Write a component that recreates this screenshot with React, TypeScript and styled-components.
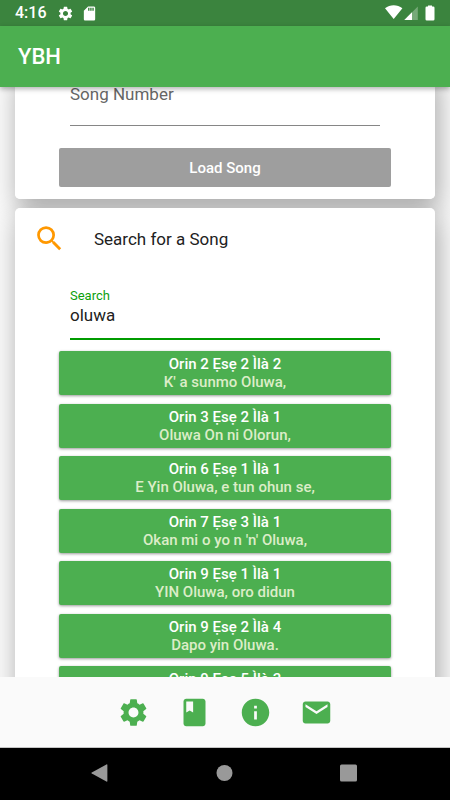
import React, { useState } from "react";
import styled, { createGlobalStyle } from "styled-components";
import {
  MdBook,
  MdEmail,
  MdInfo,
  MdSdCard,
  MdSearch,
  MdSettings,
} from "react-icons/md";

const GlobalStyle = createGlobalStyle`
  *, *::before, *::after { box-sizing: border-box; }
  body { margin: 0; font-family: Roboto, "Noto Sans", sans-serif; }
  button, input { font-family: inherit; }
`;

const Screen = styled.div`
  display: flex;
  flex-direction: column;
  height: 100vh;
  background: #fafafa;
  color: #212121;
`;

const StatusBar = styled.div`
  display: flex;
  align-items: center;
  justify-content: space-between;
  flex: none;
  height: 26px;
  padding: 0 15px;
  background: #3b843e;
  color: #fff;
`;

const StatusGroup = styled.div<{ $gap: number }>`
  display: flex;
  align-items: center;
  gap: ${(p) => p.$gap}px;
`;

const Clock = styled.span`
  font-size: 16px;
  font-weight: 500;
  line-height: 26px;
`;

const AppBar = styled.header`
  position: relative;
  z-index: 2;
  display: flex;
  align-items: center;
  flex: none;
  height: 61px;
  padding: 0 18px;
  background: #4caf50;
  color: #fff;
  box-shadow: 0 2px 5px rgba(0, 0, 0, 0.3);
`;

const Title = styled.h1`
  margin: 0;
  font-size: 22px;
  font-weight: 500;
  line-height: 28px;
`;

const Content = styled.main`
  isolation: isolate;
  flex: 1;
  min-height: 0;
  overflow: hidden;
`;

const Cards = styled.div`
  display: flex;
  flex-direction: column;
  gap: 9px;
  margin-top: -16px;
  padding: 0 15px;
`;

const Card = styled.section`
  position: relative;
  padding: 0 44px 12px;
  border-radius: 5px;
  background: #fff;

  /* The shadow sits beneath every card so neighbours stay clean. */
  &::before {
    content: "";
    position: absolute;
    inset: 0;
    z-index: -1;
    border-radius: 5px;
    box-shadow: 3px 9px 26px 1px rgba(0, 0, 0, 0.32);
  }
`;

const CardHeader = styled.div`
  display: flex;
  align-items: center;
  gap: 28px;
  height: 61px;
  margin-left: -26px;
`;

const CardIcon = styled.span`
  display: flex;
  color: #ff9800;
`;

const CardTitle = styled.h2`
  margin: 0;
  font-size: 17px;
  font-weight: 400;
  line-height: 24px;
`;

const Field = styled.div<{ $top: number }>`
  display: flex;
  flex-direction: column;
  padding: ${(p) => p.$top}px 11px 0;
`;

const FieldLabel = styled.label`
  color: #0c9f0c;
  font-size: 13px;
  line-height: 16px;
`;

const TextInput = styled.input<{ $active?: boolean }>`
  width: 100%;
  height: ${(p) => (p.$active ? 36 : 44)}px;
  padding: 0 0 ${(p) => (p.$active ? 12 : 20)}px;
  border: 0;
  border-bottom: ${(p) => (p.$active ? "2px solid #009b00" : "1px solid #868686")};
  border-radius: 0;
  outline: 0;
  background: transparent;
  color: #212121;
  font-size: 17px;
  line-height: 22px;

  &::placeholder {
    color: #666;
    opacity: 1;
  }
`;

const LoadButton = styled.button`
  display: block;
  width: 100%;
  height: 39px;
  margin-top: 22px;
  padding: 0;
  border: 0;
  border-radius: 2px;
  background: #9e9e9e;
  color: #fff;
  font-size: 15px;
  font-weight: 500;
`;

const Results = styled.ul`
  margin: 11px 0 0;
  padding: 0;
  list-style: none;
`;

const ResultItem = styled.li`
  margin-bottom: 9px;

  &:nth-child(even) {
    margin-bottom: 8px;
  }
`;

const ResultButton = styled.button`
  display: flex;
  flex-direction: column;
  align-items: center;
  justify-content: center;
  width: 100%;
  height: 44px;
  padding: 0;
  border: 0;
  border-radius: 2px;
  background: #4caf50;
  box-shadow: 0 1px 3px rgba(0, 0, 0, 0.4);
  color: #fff;
  font-size: 15px;
  font-weight: 500;
  line-height: 18px;
`;

const Verse = styled.span`
  color: #dcedc8;
`;

const BottomBar = styled.nav`
  display: flex;
  align-items: center;
  justify-content: center;
  gap: 28px;
  flex: none;
  height: 71px;
  border-bottom: 1px solid #c4c4c4;
  background: #fafafa;
`;

const BarButton = styled.button`
  display: flex;
  padding: 0;
  border: 0;
  background: none;
  color: #4caf50;
`;

const SystemBar = styled.nav`
  display: flex;
  align-items: center;
  justify-content: center;
  gap: 24%;
  flex: none;
  height: 52px;
  padding: 0 2px 2px 0;
  background: #000;
`;

const SystemButton = styled.button`
  display: flex;
  padding: 0;
  border: 0;
  background: none;
  color: #999;
`;

const results = [
  { place: "Orin 2 Ẹsẹ 2 Ìlà 2", verse: "K' a sunmo Oluwa," },
  { place: "Orin 3 Ẹsẹ 2 Ìlà 1", verse: "Oluwa On ni Olorun," },
  { place: "Orin 6 Ẹsẹ 1 Ìlà 1", verse: "E Yin Oluwa, e tun ohun se," },
  { place: "Orin 7 Ẹsẹ 3 Ìlà 1", verse: "Okan mi o yo n 'n' Oluwa," },
  { place: "Orin 9 Ẹsẹ 1 Ìlà 1", verse: "YIN Oluwa, oro didun" },
  { place: "Orin 9 Ẹsẹ 2 Ìlà 4", verse: "Dapo yin Oluwa." },
  { place: "Orin 9 Ẹsẹ 5 Ìlà 3", verse: "" },
];

const tabs = [
  { name: "Settings", Icon: MdSettings },
  { name: "Song book", Icon: MdBook },
  { name: "About", Icon: MdInfo },
  { name: "Contact", Icon: MdEmail },
];

const StatusIcons = () => (
  <svg width="50" height="16" viewBox="0 0 50 16" fill="#fff" aria-hidden="true">
    <path d="M0 3.2C5-.9 12.4-.9 17.4 3.2L8.7 14Z" />
    <path d="M32.8 1.5V15H19.3Z" opacity=".3" />
    <path d="M27 7.3V15H19.3Z" />
    <path d="M43 1.5V.5h4v1h1.2q1.3 0 1.3 1.2v11.6q0 1.2-1.3 1.2h-6.4q-1.3 0-1.3-1.2V2.7q0-1.2 1.3-1.2Z" />
  </svg>
);

export default function App() {
  const [number, setNumber] = useState("");
  const [query, setQuery] = useState("oluwa");

  return (
    <Screen>
      <GlobalStyle />
      <StatusBar>
        <StatusGroup $gap={10}>
          <Clock>4:16</Clock>
          <StatusGroup $gap={7}>
            <MdSettings size={17} />
            <MdSdCard size={17} />
          </StatusGroup>
        </StatusGroup>
        <StatusIcons />
      </StatusBar>
      <AppBar>
        <Title>YBH</Title>
      </AppBar>
      <Content>
        <Cards>
          <Card>
            <Field $top={11}>
              <TextInput
                aria-label="Song Number"
                placeholder="Song Number"
                value={number}
                onChange={(e) => setNumber(e.target.value)}
              />
            </Field>
            <LoadButton type="button">Load Song</LoadButton>
          </Card>
          <Card>
            <CardHeader>
              <CardIcon>
                <MdSearch size={33} />
              </CardIcon>
              <CardTitle>Search for a Song</CardTitle>
            </CardHeader>
            <Field $top={19}>
              <FieldLabel htmlFor="search">Search</FieldLabel>
              <TextInput
                id="search"
                $active
                value={query}
                onChange={(e) => setQuery(e.target.value)}
              />
            </Field>
            <Results>
              {results.map((r) => (
                <ResultItem key={r.place}>
                  <ResultButton type="button">
                    <span>{r.place}</span>
                    <Verse>{r.verse || "\u00a0"}</Verse>
                  </ResultButton>
                </ResultItem>
              ))}
            </Results>
          </Card>
        </Cards>
      </Content>
      <BottomBar>
        {tabs.map(({ name, Icon }) => (
          <BarButton key={name} type="button" aria-label={name}>
            <Icon size={33} />
          </BarButton>
        ))}
      </BottomBar>
      <SystemBar>
        <SystemButton type="button" aria-label="Back">
          <svg width="17" height="18" viewBox="0 0 17 18" fill="currentColor">
            <path d="M15.4.4Q16.4-.1 16.4 1v16q0 1.1-1 .6L.8 9.6q-.9-.6 0-1.2Z" />
          </svg>
        </SystemButton>
        <SystemButton type="button" aria-label="Home">
          <svg width="17" height="18" viewBox="0 0 17 18" fill="currentColor">
            <circle cx="8.5" cy="9" r="8" />
          </svg>
        </SystemButton>
        <SystemButton type="button" aria-label="Recent apps">
          <svg width="17" height="18" viewBox="0 0 17 18" fill="currentColor">
            <rect y="0.5" width="17" height="17" rx="1.5" />
          </svg>
        </SystemButton>
      </SystemBar>
    </Screen>
  );
}
